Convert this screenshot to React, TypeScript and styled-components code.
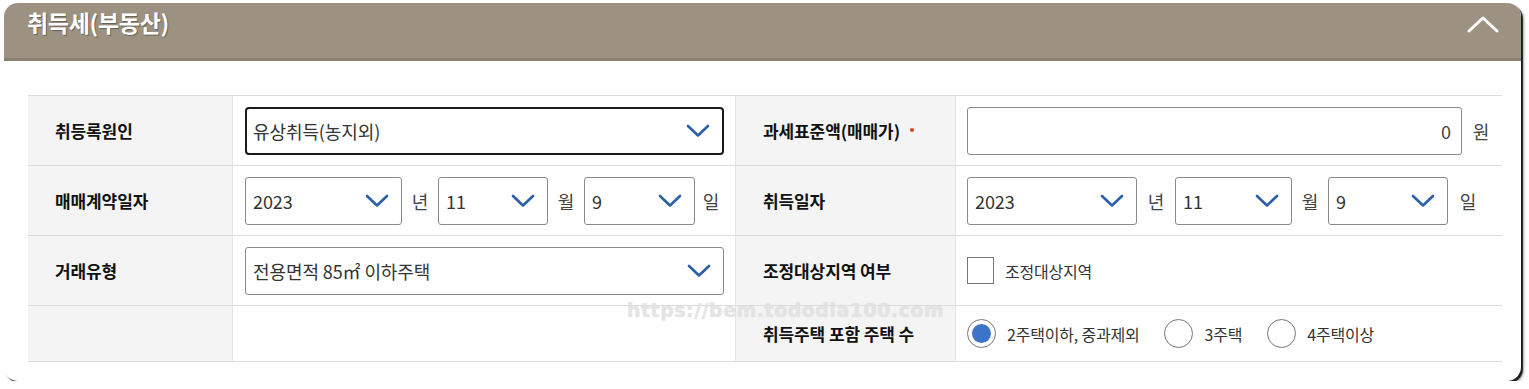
import * as React from 'react'
import styled, { createGlobalStyle } from 'styled-components'

const GlobalStyle = createGlobalStyle`
    html, body {
        margin: 0;
        padding: 0;
        background: #ffffff;
    }
    body {
        font-family: "Noto Sans CJK KR", "Noto Sans", sans-serif;
        color: #222;
    }
`

const Card = styled.section`
    position: relative;
    margin: 3px 0 0 4px;
    width: 1517px;
    height: 378px;
    box-sizing: border-box;
    background: #fff;
    border-radius: 14px;
    box-shadow: 2px 2px 1px rgba(0, 0, 0, 0.85), 3px 3px 3px rgba(0, 0, 0, 0.3);
    overflow: hidden;
`

const Header = styled.header`
    display: flex;
    align-items: center;
    justify-content: space-between;
    height: 58px;
    padding: 0 18px 0 23px;
    background: #9d9282;
    border-bottom: 3px solid #8c8170;
    box-sizing: border-box;
`

const Title = styled.h2`
    margin: 0 0 17px;
    font-size: 23px;
    font-weight: 700;
    color: #fff;
    letter-spacing: -0.3px;
    text-shadow: 1px 1px 1px rgba(0, 0, 0, 0.35);
`

const Toggle = styled.button`
    display: flex;
    align-items: center;
    justify-content: center;
    width: 40px;
    height: 30px;
    margin-bottom: 14px;
    padding: 0;
    border: 0;
    background: transparent;
    cursor: pointer;
`

const Body = styled.div`
    padding: 34px 19px 0 24px;
`

const Grid = styled.div`
    display: grid;
    grid-template-columns: 205px 502px 221px 1fr;
    grid-template-rows: 70px 70px 70px 56px;
    border-top: 1px solid #dcdcdc;
`

const Label = styled.div`
    display: flex;
    align-items: center;
    padding-left: 27px;
    background: #f4f4f4;
    border-bottom: 1px solid #dcdcdc;
    border-right: 1px solid #e6e6e6;
    border-left: ${p => (p.$inner ? '1px solid #e6e6e6' : '0')};
    font-size: 17px;
    font-weight: 700;
    color: #111;
    letter-spacing: -0.1px;
`

const Cell = styled.div`
    display: flex;
    align-items: center;
    padding: 0 12px 0 ${p => (p.$right ? '11px' : '12px')};
    border-bottom: 1px solid #dcdcdc;
    font-size: 18px;
    color: #333;
    min-width: 0;
`

const Required = styled.span`
    display: inline-block;
    width: 4px;
    height: 4px;
    margin-left: 10px;
    margin-bottom: 2px;
    border-radius: 50%;
    background: #e0401b;
`

const SelectBox = styled.div`
    display: flex;
    flex-shrink: 0;
    align-items: center;
    justify-content: space-between;
    box-sizing: border-box;
    width: ${p => p.$w}px;
    height: 48px;
    padding: 0 12px 0 ${p => (p.$focus ? '6px' : '7px')};
    border: ${p => (p.$focus ? '2px solid #1a1a1a' : '1px solid #8a8a8a')};
    border-radius: ${p => (p.$focus ? '4px' : '3px')};
    background: #fff;
    font-size: 18px;
    color: #333;
    letter-spacing: -0.1px;
`

const Unit = styled.span`
    flex-shrink: 0;
    width: ${p => p.$w}px;
    text-align: center;
    font-size: 18px;
    color: #444;
`

const AmountInput = styled.div`
    display: flex;
    flex-shrink: 0;
    align-items: center;
    justify-content: flex-end;
    box-sizing: border-box;
    width: 495px;
    height: 48px;
    padding-right: 10px;
    border: 1px solid #8a8a8a;
    border-radius: 3px;
    font-size: 18px;
    color: #444;
`

const CheckBox = styled.span`
    display: inline-block;
    flex-shrink: 0;
    box-sizing: border-box;
    width: 27px;
    height: 27px;
    border: 1px solid #777;
    background: #fff;
`

const Radio = styled.span`
    display: inline-flex;
    flex-shrink: 0;
    align-items: center;
    justify-content: center;
    box-sizing: border-box;
    width: 29px;
    height: 29px;
    border-radius: 50%;
    border: 1px solid #777;
    background: #fff;
    &::after {
        content: '';
        width: 19px;
        height: 19px;
        border-radius: 50%;
        background: ${p => (p.$checked ? '#3b74c8' : 'transparent')};
    }
`

const OptionText = styled.span`
    margin: 0 ${p => p.$after || 0}px 0 11px;
    font-size: 16px;
    color: #333;
    letter-spacing: -0.2px;
    white-space: nowrap;
`

const Watermark = styled.div`
    position: absolute;
    left: 623px;
    top: 296px;
    font-family: "DejaVu Sans", sans-serif;
    font-size: 19px;
    font-weight: 700;
    color: rgba(232, 232, 232, 0.75);
    letter-spacing: 0.5px;
    text-shadow: 0 0 1px rgba(190, 190, 190, 0.6);
    pointer-events: none;
`

const ChevronDown = () => (
    <svg width="24" height="14" viewBox="0 0 24 14">
        <path d="M2 2 L12 11.5 L22 2" fill="none" stroke="#2d5ea8" strokeWidth="2.6" strokeLinecap="round" strokeLinejoin="round" />
    </svg>
)

const Select = ({ value, w, focus }: { value: string; w: number; focus?: boolean }) => (
    <SelectBox $w={w} $focus={focus}>
        <span>{value}</span>
        <ChevronDown />
    </SelectBox>
)

const DateGroup = ({ widths }: { widths: number[] }) => (
    <>
        <Select value="2023" w={widths[0]} />
        <Unit $w={widths[3]}>년</Unit>
        <Select value="11" w={widths[1]} />
        <Unit $w={widths[4]}>월</Unit>
        <Select value="9" w={widths[2]} />
        <Unit $w={widths[5]}>일</Unit>
    </>
)

const App: React.FC = () => {
    return (
        <>
            <GlobalStyle />
            <Card>
                <Header>
                    <Title>취득세(부동산)</Title>
                    <Toggle aria-label="접기">
                        <svg width="34" height="20" viewBox="0 0 34 20">
                            <path d="M3 17 L17 4 L31 17" fill="none" stroke="#fff" strokeWidth="3" strokeLinecap="round" strokeLinejoin="round" />
                        </svg>
                    </Toggle>
                </Header>
                <Body>
                    <Grid>
                        <Label>취등록원인</Label>
                        <Cell>
                            <Select value="유상취득(농지외)" w={479} focus />
                        </Cell>
                        <Label $inner>
                            과세표준액(매매가)
                            <Required />
                        </Label>
                        <Cell $right>
                            <AmountInput>0</AmountInput>
                            <Unit $w={38}>원</Unit>
                        </Cell>

                        <Label>매매계약일자</Label>
                        <Cell>
                            <DateGroup widths={[157, 110, 111, 36, 36, 32]} />
                        </Cell>
                        <Label $inner>취득일자</Label>
                        <Cell $right>
                            <DateGroup widths={[170, 117, 120, 38, 36, 40]} />
                        </Cell>

                        <Label>거래유형</Label>
                        <Cell>
                            <Select value="전용면적 85㎡ 이하주택" w={479} />
                        </Cell>
                        <Label $inner>조정대상지역 여부</Label>
                        <Cell $right>
                            <CheckBox />
                            <OptionText>조정대상지역</OptionText>
                        </Cell>

                        <Label />
                        <Cell />
                        <Label $inner>취득주택 포함 주택 수</Label>
                        <Cell $right>
                            <Radio $checked />
                            <OptionText $after={25}>2주택이하, 중과제외</OptionText>
                            <Radio />
                            <OptionText $after={25}>3주택</OptionText>
                            <Radio />
                            <OptionText>4주택이상</OptionText>
                        </Cell>
                    </Grid>
                </Body>
                <Watermark>https://bem.tododia100.com</Watermark>
            </Card>
        </>
    )
}

export default App
